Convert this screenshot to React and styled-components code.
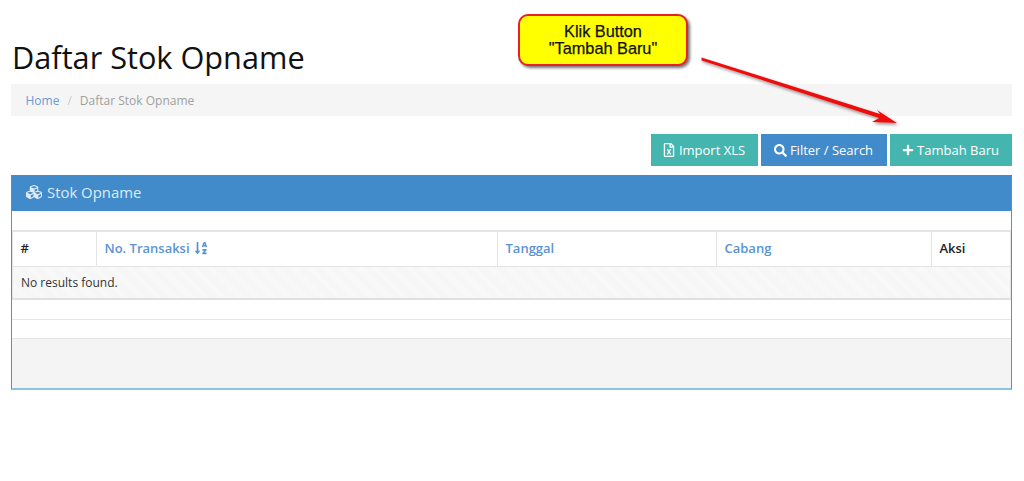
import React from "react";
import styled, { createGlobalStyle } from "styled-components";
import { FaCubes, FaRegFileExcel, FaSearch, FaPlus, FaSortAlphaDown } from "react-icons/fa";

const Global = createGlobalStyle`
  html, body { margin: 0; padding: 0; background: #fff; }
  body { font-family: "Open Sans", "Liberation Sans", sans-serif; font-size: 13px; color: #333; }
`;

const Page = styled.div`
  position: relative;
  width: 1024px;
  height: 481px;
  overflow: hidden;
  box-sizing: border-box;
  padding: 0 12px 0 11px;
`;

const Title = styled.h1`
  margin: 0;
  padding: 37px 0 0 1px;
  height: 47px;
  font-size: 30.7px;
  line-height: 40px;
  font-weight: 400;
  color: #111;
`;

const Breadcrumb = styled.nav`
  display: flex;
  align-items: center;
  gap: 7px;
  height: 32px;
  padding: 0 0 0 14.5px;
  box-sizing: border-box;
  background: #f5f5f5;
  font-size: 12px;
  color: #a0a0a0;
`;

const Crumb = styled.a`
  color: #6b9ad6;
  text-decoration: none;
`;

const Sep = styled.span`
  color: #ccc;
  margin: 0 1px;
`;

const Toolbar = styled.div`
  display: flex;
  justify-content: flex-end;
  gap: 3px;
  margin-top: 18px;
`;

const Button = styled.button`
  display: flex;
  align-items: center;
  justify-content: center;
  gap: ${(p) => p.$gap}px;
  height: 32px;
  width: ${(p) => p.$w}px;
  padding: 0 ${(p) => p.$pr}px 0 0;
  border: 0;
  background: ${(p) => p.$bg};
  color: #fff;
  font-family: inherit;
  font-size: 13px;
  svg { font-size: ${(p) => p.$icon}px; }
`;

const Panel = styled.section`
  margin-top: 9px;
  height: 215px;
  box-sizing: border-box;
  border: 1px solid #3d9ad9;
  border-top-color: #428bca;
  border-bottom: 2px solid #8cc3e0;
  display: flex;
  flex-direction: column;
`;

const PanelHead = styled.header`
  display: flex;
  align-items: center;
  gap: 5px;
  height: 35px;
  flex: none;
  box-sizing: border-box;
  padding: 0 0 3px 14px;
  background: #428bca;
  color: #dfeaf5;
  font-size: 14.9px;
  svg { font-size: 16px; }
`;

const Spacer = styled.div`
  height: 19px;
  flex: none;
`;

const Table = styled.table`
  width: 998px;
  table-layout: fixed;
  border-collapse: collapse;
  border-top: 2px solid #e4e4e4;
  border-bottom: 2px solid #e0e0e0;
  border-left: 1px solid #e4e4e4;
  border-right: 1px solid #e4e4e4;
  font-size: 13px;
`;

const Th = styled.th`
  width: ${(p) => p.$w}px;
  height: 35px;
  box-sizing: border-box;
  padding: 0 0 1px 7.5px;
  text-align: left;
  font-weight: 600;
  color: ${(p) => (p.$link ? "#5a93d3" : "#222")};
  border-right: 1px solid #e4e4e4;
  border-bottom: 1px solid #e4e4e4;
  &:last-child { border-right: 0; }
  svg { margin-left: 4px; vertical-align: -2px; font-size: 14px; }
`;

const Td = styled.td`
  height: 31px;
  padding: 0 0 0 8px;
  font-size: 12px;
  color: #333;
  background-color: #f8f8f8;
  background-image: repeating-linear-gradient(45deg, #f4f4f4 0 1px, #fafafa 1px 2px);
`;

const FootRow = styled.div`
  height: ${(p) => p.$h}px;
  flex: none;
  border-bottom: 1px solid #e6e6e6;
`;

const Foot = styled.div`
  flex: 1;
  background: #f4f4f4;
`;

const Callout = styled.div`
  position: absolute;
  left: 518px;
  top: 14px;
  width: 170px;
  height: 52px;
  box-sizing: border-box;
  padding-top: 7px;
  border: 2px solid #e8202a;
  border-radius: 10px;
  background: #ffff00;
  box-shadow: 2px 2px 3px rgba(0, 0, 0, 0.55);
  text-align: center;
  font-family: "Liberation Sans", Arial, sans-serif;
  font-size: 16.3px;
  -webkit-text-stroke: 0.25px #111;
  line-height: 17px;
  color: #111;
`;

const Arrow = styled.svg`
  position: absolute;
  left: 695px;
  top: 50px;
`;

export default function App() {
  return (
    <Page>
      <Global />
      <Title>Daftar Stok Opname</Title>
      <Breadcrumb>
        <Crumb>Home</Crumb>
        <Sep>/</Sep>
        <span>Daftar Stok Opname</span>
      </Breadcrumb>
      <Toolbar>
        <Button $w={107} $bg="#45b6af" $gap={3} $icon={14} $pr={2}><FaRegFileExcel />Import XLS</Button>
        <Button $w={126} $bg="#428bca" $gap={3} $icon={13} $pr={1}><FaSearch />Filter / Search</Button>
        <Button $w={122} $bg="#45b6af" $gap={3} $icon={12} $pr={1}><FaPlus />Tambah Baru</Button>
      </Toolbar>
      <Panel>
        <PanelHead><FaCubes />Stok Opname</PanelHead>
        <Spacer />
        <Table>
          <thead>
            <tr>
              <Th $w={84}>#</Th>
              <Th $w={401} $link>No. Transaksi<FaSortAlphaDown /></Th>
              <Th $w={219} $link>Tanggal</Th>
              <Th $w={215} $link>Cabang</Th>
              <Th $w={79}>Aksi</Th>
            </tr>
          </thead>
          <tbody>
            <tr><Td colSpan={5}>No results found.</Td></tr>
          </tbody>
        </Table>
        <FootRow $h={19} />
        <FootRow $h={18} />
        <Foot />
      </Panel>
      <Callout>Klik Button<br />"Tambah Baru"</Callout>
      <Arrow width="210" height="90" viewBox="0 0 210 90">
        <defs>
          <filter id="s" x="-10%" y="-30%" width="120%" height="160%">
            <feDropShadow dx="1.5" dy="2" stdDeviation="1.5" floodColor="#000" floodOpacity="0.4" />
          </filter>
        </defs>
        <path d="M6.5 7.5 L6.5 10.5 L184 68 L177 72 L202 73 L182 60 L185 64 Z" fill="#ee1111" filter="url(#s)" />
      </Arrow>
    </Page>
  );
}
